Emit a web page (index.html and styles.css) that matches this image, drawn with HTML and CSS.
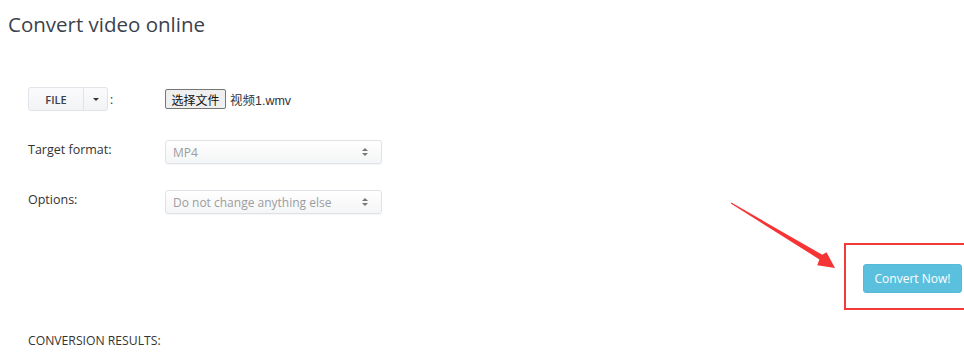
FILE: index.html
```html
<!DOCTYPE html>
<html>
<head>
<meta charset="utf-8">
<link rel="stylesheet" href="styles.css">
</head>
<body>
<div class="page">
  <h1 class="title">Convert video online</h1>
  <div class="form">
    <div class="row row-file">
      <div class="label label-file">
        <span class="btn-group">
          <span class="btn-file">FILE</span>
          <span class="btn-caret"><span class="caret"></span></span>
        </span>
        <span class="colon">:</span>
      </div>
      <div class="file-input">
        <span class="file-btn">选择文件</span>
        <span class="file-name">视频1.wmv</span>
      </div>
    </div>
    <div class="row row-target">
      <div class="label label-text">Target format:</div>
      <div class="select select-target">
        <span class="select-text">MP4</span>
        <span class="arrows"><span class="up"></span><span class="down"></span></span>
      </div>
    </div>
    <div class="row row-options">
      <div class="label label-text">Options:</div>
      <div class="select select-options">
        <span class="select-text">Do not change anything else</span>
        <span class="arrows"><span class="up"></span><span class="down"></span></span>
      </div>
    </div>
  </div>
  <div class="actions">
    <button class="convert">Convert Now!</button>
  </div>
  <div class="results">CONVERSION RESULTS:</div>

  <div class="highlight-box"></div>
  <svg class="annot-arrow" width="964" height="355" viewBox="0 0 964 355">
    <polygon fill="#f53535" points="730.8,203.5 731.4,202.6 822.3,254.7 826.5,252.2 835,268 817.2,265.2 819.4,259.4" />
  </svg>
</div>
</body>
</html>
```
FILE: styles.css
```css
* { box-sizing: border-box; }
html, body { margin: 0; padding: 0; background: #fff; }
body {
  font-family: "Open Sans", "Noto Sans", sans-serif;
  color: #333;
  width: 964px;
  height: 355px;
  overflow: hidden;
}
.page { position: relative; width: 964px; height: 355px; }

.title {
  margin: 0;
  padding: 10px 0 0 8px;
  font-size: 20.5px;
  line-height: 28px;
  font-weight: 400;
  color: #3c424c;
}

.form { padding-left: 28px; margin-top: 49px; }
.row { display: flex; align-items: center; }
.label {
  width: 137px;
  font-size: 12.5px;
  color: #333;
  flex: none;
}
.label-text { align-self: flex-start; line-height: 20px; }
.row-target { margin-top: 29px; }
.row-options { margin-top: 26px; }

.label-file { display: flex; align-items: center; }
.btn-group {
  display: flex;
  height: 24px;
  border: 1px solid #e0e3e7;
  border-radius: 3px;
  background: linear-gradient(#fbfbfc, #f1f3f5);
}
.btn-file {
  width: 55px;
  display: flex;
  align-items: center;
  justify-content: center;
  font-size: 11px;
  font-weight: 600;
  color: #3a414b;
  border-right: 1px solid #e0e3e7;
}
.btn-caret {
  width: 23px;
  display: flex;
  align-items: center;
  justify-content: center;
}
.caret {
  width: 0; height: 0;
  border-left: 3px solid transparent;
  border-right: 3px solid transparent;
  border-top: 3px solid #333;
}
.colon { margin-left: 2px; font-size: 12px; color: #333; }

.file-input { display: flex; align-items: center; height: 24px; }
.file-btn {
  height: 20px;
  width: 61px;
  display: flex;
  align-items: center;
  justify-content: center;
  font-family: "Noto Sans CJK SC", "Noto Sans", sans-serif;
  font-size: 12px;
  color: #111;
  background: #efefef;
  border: 1px solid #767676;
  border-radius: 2px;
}
.file-name {
  margin-left: 4px;
  font-family: "Liberation Sans", "Noto Sans CJK SC", sans-serif;
  font-size: 12.5px;
  color: #333;
}

.select {
  width: 217px;
  height: 24px;
  border: 1px solid #dfe2e6;
  border-radius: 3px;
  background: linear-gradient(#ffffff, #f4f5f6);
  box-shadow: 0 1px 1px rgba(0,0,0,0.04);
  display: flex;
  align-items: center;
  justify-content: space-between;
  padding: 0 13px 0 7px;
}
.select-text { font-size: 12px; color: #9a9da1; }
.arrows { display: flex; flex-direction: column; gap: 2px; }
.up, .down {
  width: 0; height: 0;
  border-left: 3px solid transparent;
  border-right: 3px solid transparent;
}
.up { border-bottom: 3px solid #777; }
.down { border-top: 3px solid #777; }

.actions {
  display: flex;
  justify-content: flex-end;
  padding-right: 2px;
  margin-top: 50px;
}
.convert {
  width: 99px;
  height: 29px;
  border: 1px solid #55b9d8;
  border-radius: 3px;
  background: #5bc0de;
  color: #fff;
  font-family: "Open Sans", sans-serif;
  font-size: 12px;
  padding: 0;
}

.results {
  padding-left: 28px;
  margin-top: 40px;
  font-size: 12.2px;
  color: #333;
  line-height: 15px;
}

.highlight-box {
  position: absolute;
  left: 844px;
  top: 243px;
  width: 130px;
  height: 67px;
  border: 2px solid #f23a3a;
}
.annot-arrow {
  position: absolute;
  left: 0; top: 0;
  pointer-events: none;
}
```
